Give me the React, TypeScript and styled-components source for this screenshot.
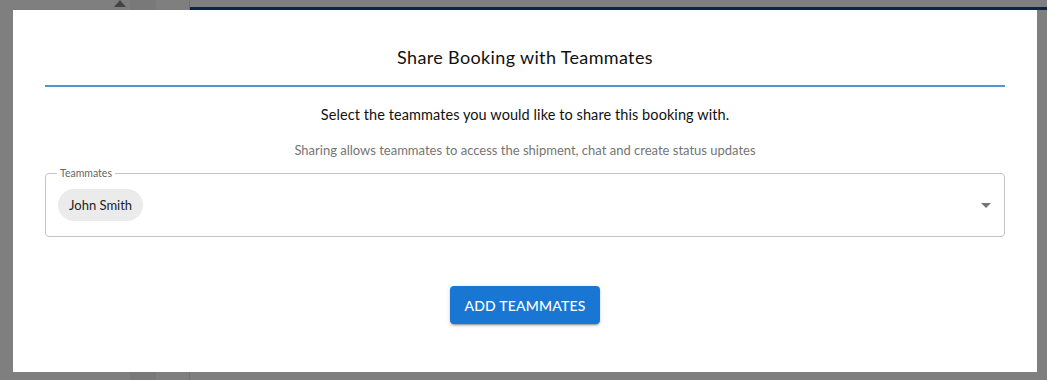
import * as React from 'react';
import styled, { createGlobalStyle } from 'styled-components';

const Global = createGlobalStyle`
    html, body { margin: 0; padding: 0; }
    body {
        font-family: Lato, "Noto Sans", sans-serif;
        width: 1047px;
        height: 380px;
        overflow: hidden;
    }
`

export default function App() {
  return (
      <Page>
          <Global />
          <PageSide>
              <SideCaret />
          </PageSide>
          <PageGutter />
          <PageMain>
              <PageTabs />
          </PageMain>
          <Backdrop>
              <Dialog>
                  <Title>Share Booking with Teammates</Title>
                  <Divider />
                  <Lead>Select the teammates you would like to share this booking with.</Lead>
                  <Hint>Sharing allows teammates to access the shipment, chat and create status updates</Hint>
                  <Field>
                      <Legend>Teammates</Legend>
                      <Chip>John Smith</Chip>
                      <Arrow viewBox="0 0 24 24">
                          <path d="M7 10l5 5 5-5z" />
                      </Arrow>
                  </Field>
                  <Actions>
                      <Button>ADD TEAMMATES</Button>
                  </Actions>
              </Dialog>
          </Backdrop>
      </Page>
    )
}

const Page = styled.div`
    position : relative;
    display : flex;
    width : 1047px;
    height : 380px;
    background-color : white;
`

const PageSide = styled.div`
    width : 130px;
    display : flex;
    justify-content : flex-end;
    padding-right : 4px;
    box-sizing : border-box;
`

const SideCaret = styled.div`
    width : 0;
    height : 0;
    border-left : 6px solid transparent;
    border-right : 6px solid transparent;
    border-bottom : 7px solid #888;
`

const PageGutter = styled.div`
    width : 26px;
    background-color : #f2f2f2;
`

const PageMain = styled.div`
    flex : 1;
    margin-left : 33px;
    border-left : 1px solid #e0e0e0;
`

const PageTabs = styled.div`
    height : 7px;
    border-bottom : 3px solid #1a4b80;
`

const Backdrop = styled.div`
    position : absolute;
    inset : 0;
    background-color : rgba(0, 0, 0, 0.5);
    display : flex;
    align-items : flex-start;
    padding : 10px 0 0 13px;
`

const Dialog = styled.div`
    width : 1024px;
    height : 362px;
    background-color : white;
    box-sizing : border-box;
    padding : 0 32px;
    display : flex;
    flex-direction : column;
    align-items : center;
    color : #111;
`

const Title = styled.h2`
    margin : 36px 0 0;
    font-size : 18px;
    font-weight : 400;
    line-height : 22px;
    letter-spacing : 0.35px;
`

const Divider = styled.div`
    align-self : stretch;
    height : 2px;
    margin-top : 17px;
    background-color : #5393d8;
`

const Lead = styled.p`
    margin : 19px 0 0;
    font-size : 14.5px;
    line-height : 18px;
    letter-spacing : 0.08px;
`

const Hint = styled.p`
    margin : 18px 0 0;
    font-size : 13px;
    line-height : 16px;
    color : #757575;
`

const Field = styled.div`
    position : relative;
    align-self : stretch;
    height : 64px;
    margin-top : 15px;
    border : 1px solid #c4c4c4;
    border-radius : 4px;
    box-sizing : border-box;
    display : flex;
    align-items : center;
    padding : 0 12px;
`

const Legend = styled.span`
    position : absolute;
    top : -7px;
    left : 11px;
    padding : 0 3px;
    background-color : white;
    font-size : 10.5px;
    line-height : 12px;
    color : #666;
`

const Chip = styled.span`
    height : 32px;
    padding : 0 11px;
    border-radius : 16px;
    background-color : #ebebeb;
    font-size : 13px;
    color : #222;
    display : flex;
    align-items : center;
`

const Arrow = styled.svg`
    width : 24px;
    height : 24px;
    margin-left : auto;
    margin-right : -6px;
    fill : #757575;
`

const Actions = styled.div`
    margin-top : 49px;
`

const Button = styled.button`
    width : 150px;
    height : 38px;
    border : none;
    border-radius : 4px;
    background-color : #1976d2;
    color : white;
    font-family : inherit;
    font-size : 14px;
    font-weight : 500;
    letter-spacing : 0.2px;
    box-shadow : 0 3px 1px -2px rgba(0,0,0,0.2), 0 2px 2px 0 rgba(0,0,0,0.14), 0 1px 5px 0 rgba(0,0,0,0.12);
`
